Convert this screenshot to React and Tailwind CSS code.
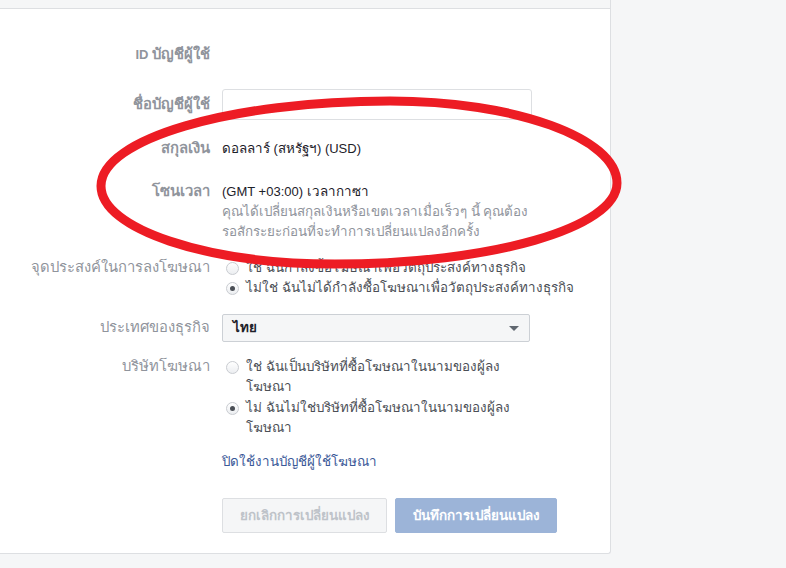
import React from "react";

const font = { fontFamily: '"Liberation Sans", Tahoma, "Noto Sans", sans-serif' };

function T({ children, big }) {
  const s = String(children);
  const parts = s.split(/([\u0E00-\u0E7F]+)/);
  return (
    <>
      {parts.map((p, i) =>
        /[\u0E00-\u0E7F]/.test(p) ? (
          <span key={i} className={big ? "text-[14.8px] leading-none" : "text-[13.4px] leading-none"}>{p}</span>
        ) : (
          <React.Fragment key={i}>{p}</React.Fragment>
        )
      )}
    </>
  );
}

function Radio({ checked }) {
  return (
    <span className="ml-[4px] mt-[4px] flex h-[13px] w-[13px] shrink-0 items-center justify-center rounded-full border border-[#c9ccd1] bg-gradient-to-b from-[#ffffff] to-[#eceef1]">
      {checked && <span className="h-[5px] w-[5px] rounded-full bg-[#4b4f56]" />}
    </span>
  );
}

function Row({ label, bold, children, className = "" }) {
  return (
    <div className={"grid grid-cols-[210px_1fr] gap-x-3 " + className}>
      <div className={"whitespace-nowrap text-right text-[13px] leading-[20px] text-[#90949c] " + (bold ? "font-bold" : "")}>
        <T big>{label}</T>
      </div>
      <div className="text-[13px] leading-[20px] text-[#1d2129]">{children}</div>
    </div>
  );
}

export default function App() {
  return (
    <div className="relative h-[568px] w-[786px] overflow-hidden bg-[#f5f6f7]" style={font}>
      <div className="h-[554px] w-[611px] rounded-br-[3px] border-r border-b border-[#dddfe2] bg-white">
        <div className="h-[9px] border-b border-[#dddfe2] bg-[#f5f6f7]" />
        <div className="flex flex-col">
          <Row label="ID บัญชีผู้ใช้" bold className="mt-[36px]" />
          <Row label="ชื่อบัญชีผู้ใช้" bold className="mt-[24px] items-center">
            <div className="h-[31px] w-[310px] rounded-[3px] border border-[#dddfe2] bg-white" />
          </Row>
          <Row label="สกุลเงิน" bold className="mt-[19px]">
            <T>ดอลลาร์ (สหรัฐฯ) (USD)</T>
          </Row>
          <Row label="โซนเวลา" bold className="mt-[23px]">
            <div><T>(GMT +03:00) เวลากาซา</T></div>
            <div className="text-[#90949c]">
              <T>คุณได้เปลี่ยนสกุลเงินหรือเขตเวลาเมื่อเร็วๆ นี้ คุณต้อง</T>
              <br />
              <T>รอสักระยะก่อนที่จะทำการเปลี่ยนแปลงอีกครั้ง</T>
            </div>
          </Row>
          <Row label="จุดประสงค์ในการลงโฆษณา" className="mt-[16px]">
            <div className="flex flex-col">
              <label className="flex gap-[7px] text-[#4b4f56]">
                <Radio />
                <span><T>ใช่ ฉันกำลังซื้อโฆษณาเพื่อวัตถุประสงค์ทางธุรกิจ</T></span>
              </label>
              <label className="flex gap-[7px] text-[#4b4f56]">
                <Radio checked />
                <span><T>ไม่ใช่ ฉันไม่ได้กำลังซื้อโฆษณาเพื่อวัตถุประสงค์ทางธุรกิจ</T></span>
              </label>
            </div>
          </Row>
          <Row label="ประเทศของธุรกิจ" className="mt-[16px] items-center">
            <div className="flex h-[28px] w-[308px] items-center justify-between rounded-[2px] border border-[#ccd0d5] bg-[#f5f6f7] pl-[10px] pr-[10px]">
              <span className="font-bold text-[#1d2129]"><T>ไทย</T></span>
              <span className="h-0 w-0 border-x-[5px] border-t-[5px] border-x-transparent border-t-[#606770]" />
            </div>
          </Row>
          <Row label="บริษัทโฆษณา" className="mt-[15px]">
            <div className="flex w-[300px] flex-col gap-[1px]">
              <label className="flex gap-[7px] text-[#4b4f56]">
                <Radio />
                <span><T>ใช่ ฉันเป็นบริษัทที่ซื้อโฆษณาในนามของผู้ลง</T><br /><T>โฆษณา</T></span>
              </label>
              <label className="flex gap-[7px] text-[#4b4f56]">
                <Radio checked />
                <span><T>ไม่ ฉันไม่ใช่บริษัทที่ซื้อโฆษณาในนามของผู้ลง</T><br /><T>โฆษณา</T></span>
              </label>
            </div>
          </Row>
          <Row label="" className="mt-[14px]">
            <span className="text-[#3b5998]"><T>ปิดใช้งานบัญชีผู้ใช้โฆษณา</T></span>
          </Row>
          <div className="mt-[26px] flex gap-[8px] pl-[222px]">
            <button className="h-[35px] w-[165px] rounded-[2px] border border-[#dddfe2] bg-[#f5f6f7] text-[13px] font-bold leading-[20px] text-[#bec3c9]">
              <T>ยกเลิกการเปลี่ยนแปลง</T>
            </button>
            <button className="h-[35px] w-[162px] rounded-[2px] border border-[#9cb4d8] bg-[#9cb4d8] text-[13px] font-bold leading-[20px] text-white">
              <T>บันทึกการเปลี่ยนแปลง</T>
            </button>
          </div>
        </div>
      </div>
      <svg className="pointer-events-none absolute left-0 top-0" width="786" height="568" viewBox="0 0 786 568">
        <path
          d="M101 186 C101 139 230 101 390 101 C515 101 617 138 617 183 C617 228 491 264 335 264 C206 264 101 229 101 186 Z"
          fill="none"
          stroke="#ed1c24"
          strokeWidth="9"
        />
      </svg>
    </div>
  );
}
